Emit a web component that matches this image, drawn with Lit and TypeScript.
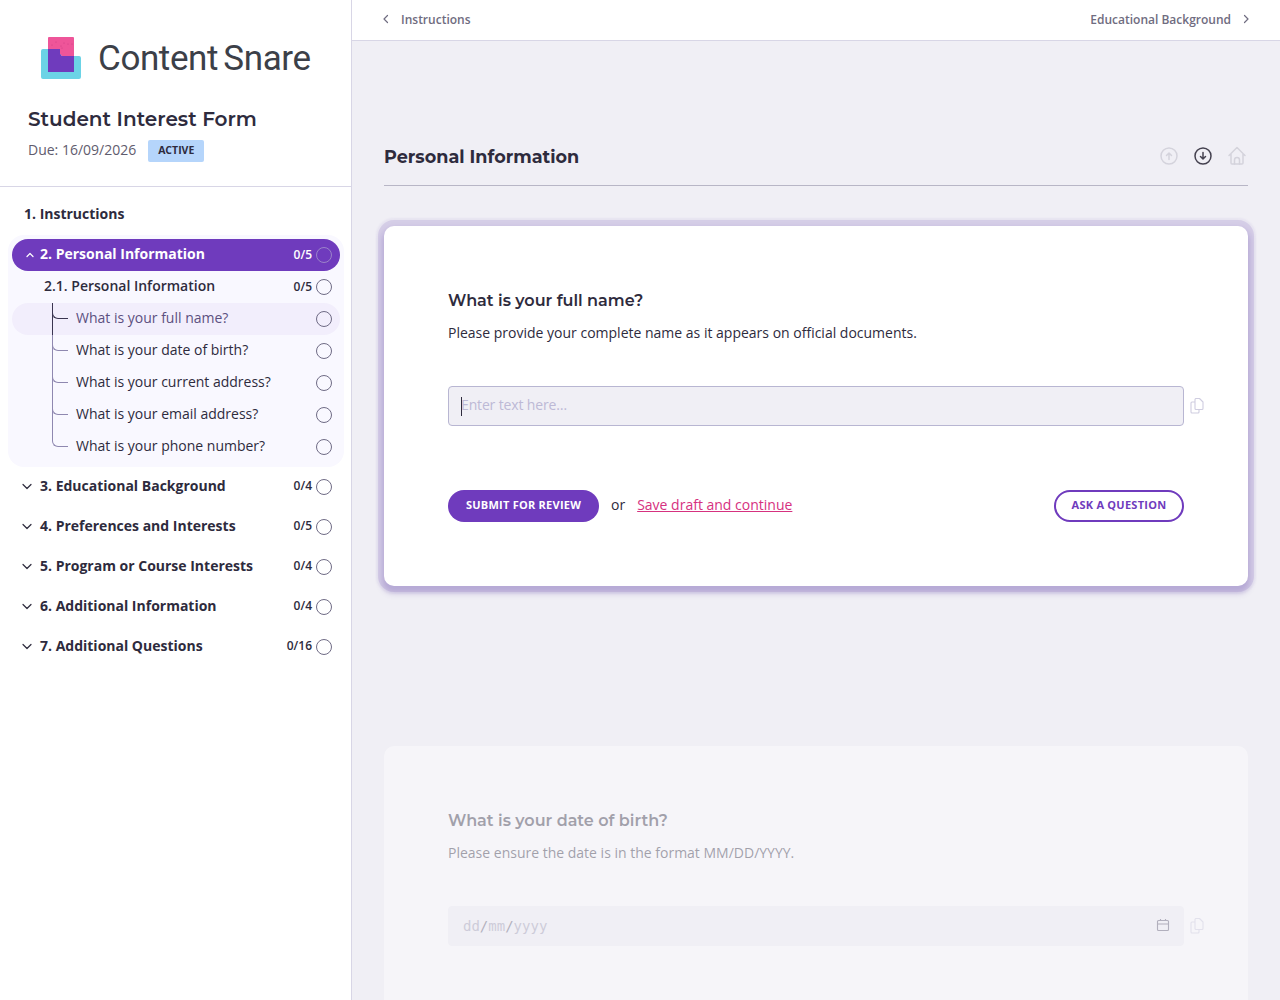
import { LitElement, css, html, svg } from 'lit';
import { customElement } from 'lit/decorators.js';

const QUESTIONS = [
    'What is your full name?',
    'What is your date of birth?',
    'What is your current address?',
    'What is your email address?',
    'What is your phone number?',
];

const SECTIONS = [
    { label: '3. Educational Background', count: '0/4' },
    { label: '4. Preferences and Interests', count: '0/5' },
    { label: '5. Program or Course Interests', count: '0/4' },
    { label: '6. Additional Information', count: '0/4' },
    { label: '7. Additional Questions', count: '0/16' },
];

const chevron = (d: string) => html`<svg class="chev" width="12" height="12" viewBox="0 0 12 12" fill="none" stroke="currentColor" stroke-width="1.2" stroke-linecap="round" stroke-linejoin="round"><path d=${d}></path></svg>`;

const copyIcon = html`<svg class="copy" width="14" height="16" viewBox="0 0 14 16" fill="none" stroke="currentColor" stroke-width="1.1" stroke-linejoin="round">
    <path d="M6 .5h3.500L13 4v6.500a1 1 0 0 1-1 1H6a1 1 0 0 1-1-1v-9a1 1 0 0 1 1-1z"></path>
    <path d="M5 4H2a1 1 0 0 0-1 1v9a1 1 0 0 0 1 1h6a1 1 0 0 0 1-1V11.500"></path>
</svg>`;

@customElement('app-root')
export class AppRoot extends LitElement {
    static override styles = css`
        :host {
            display: flex;
            height: 1000px;
            overflow: hidden;
            font-family: "Open Sans", "Liberation Sans", sans-serif;
            font-size: 14px;
            color: #2e2b3d;
            background: #f0eff5;
        }

        .sidebar {
            width: 351px;
            flex: none;
            background: #fff;
            border-right: 1px solid #d8d6e6;
        }

        .side-head {
            padding: 37px 0 24px 28px;
            border-bottom: 1px solid #d8d6e6;
        }

        .logo {
            display: flex;
            align-items: center;
            gap: 17px;
            margin-left: 13px;
            height: 42px;
        }

        .logo-text {
            font-family: Roboto, sans-serif;
            font-size: 35px;
            color: #3c4048;
            letter-spacing: -0.4px;
            word-spacing: -3px;
            white-space: nowrap;
        }

        .form-title {
            margin: 28px 0 0;
            font-family: Montserrat, Inter, sans-serif;
            font-size: 20px;
            font-weight: 600;
            line-height: 24px;
            color: #2e2b3d;
        }

        .due {
            display: flex;
            align-items: center;
            gap: 12px;
            margin-top: 9px;
            height: 22px;
            color: #5f5c6e;
        }

        .due-text {
            margin-bottom: 3px;
        }

        .badge {
            width: 56px;
            height: 22px;
            line-height: 21px;
            text-align: center;
            border-radius: 2px;
            background: #b5d5fb;
            color: #2e2b3d;
            font-size: 10.500px;
            font-weight: 700;
        }

        nav {
            padding: 11px 7px 0 8px;
        }

        .row {
            position: relative;
            display: flex;
            align-items: center;
            height: 32px;
            font-weight: 600;
            padding-right: 8px;
        }

        .row.strong {
            font-weight: 700;
        }

        .row .label {
            flex: 1;
            white-space: nowrap;
            margin-bottom: 3px;
        }

        .row.plain .label {
            margin-bottom: 1px;
        }

        .meta {
            display: flex;
            align-items: center;
            gap: 4px;
        }

        .count {
            font-size: 12px;
            font-weight: 600;
            margin-bottom: 2px;
        }

        .dot {
            width: 16px;
            height: 16px;
            box-sizing: border-box;
            flex: none;
            border: 1px solid #6f6b85;
            border-radius: 50%;
        }

        .chev {
            flex: none;
            color: #2e2b3d;
        }

        .plain {
            padding-left: 16px;
            padding-right: 12px;
        }

        .panel {
            margin-top: 5px;
            padding: 4px;
            background: #f9f8ff;
            border-radius: 16px;
        }

        .pill {
            padding-left: 12px;
            gap: 4px;
            background: #6f3bbd;
            color: #fff;
            border-radius: 16px;
        }

        .pill .chev {
            color: #fff;
        }

        .pill .dot {
            border-color: #9b83c9;
        }

        .sub {
            padding-left: 32px;
        }

        .q {
            padding-left: 64px;
            font-weight: 400;
            border-radius: 16px;
        }

        .q::before {
            content: "";
            position: absolute;
            left: 40px;
            top: 0;
            width: 15px;
            height: 15px;
            border-left: 1px solid #8f88b0;
            border-bottom: 1px solid #8f88b0;
            border-bottom-left-radius: 6px;
        }

        .q::after {
            content: "";
            position: absolute;
            left: 40px;
            top: 10px;
            bottom: 0;
            width: 1px;
            background: #8f88b0;
        }

        .q:last-child::after {
            display: none;
        }

        .q.current {
            background: #f2eefc;
            color: #5c5080;
        }

        .q.current::before {
            border-color: #3a3550;
        }

        .q.current::after {
            background: #3a3550;
        }

        .rest {
            display: flex;
            flex-direction: column;
            gap: 8px;
            margin-top: 3px;
        }

        .rest .row {
            padding-left: 13px;
            padding-right: 12px;
            gap: 7px;
        }

        .rest .label {
            margin-bottom: 2px;
        }

        .rest .count {
            margin-bottom: 1px;
        }

        .rest .dot {
            margin-top: 1px;
        }

        main {
            flex: 1;
            min-width: 0;
        }

        .topbar {
            display: flex;
            align-items: center;
            justify-content: space-between;
            height: 40px;
            padding: 0 28px;
            background: #fff;
            border-bottom: 1px solid #d8d6e6;
            font-size: 12px;
            font-weight: 600;
            color: #6f6c80;
        }

        .topbar span {
            display: flex;
            align-items: center;
            gap: 9px;
            margin-bottom: 2px;
        }

        .topbar .chev {
            color: #6f6c80;
        }

        .content {
            padding: 95px 32px 0;
        }

        .heading {
            display: flex;
            align-items: center;
            justify-content: space-between;
            height: 40px;
            padding-bottom: 9px;
            border-bottom: 1px solid #b8b6c6;
        }

        h2 {
            margin: 0;
            padding-top: 1px;
            font-family: Montserrat, Inter, sans-serif;
            font-size: 17.600px;
            font-weight: 700;
            color: #2e2b3d;
        }

        .tools {
            display: flex;
            gap: 14px;
            margin-right: 1px;
        }

        .tools svg {
            color: #d4d3dc;
        }

        .tools svg.on {
            color: #44414f;
        }

        .card {
            box-sizing: border-box;
            margin-top: 40px;
            padding: 64px;
            background: #fff;
            border-radius: 10px;
            box-shadow: 0 0 0 6px rgba(112, 80, 180, 0.15), 0 0 2px 8px rgba(112, 80, 180, 0.07), 0 5px 6px 2px rgba(90, 60, 160, 0.26);
        }

        .card.next {
            margin-top: 160px;
            height: 400px;
            opacity: 0.4;
            box-shadow: none;
        }

        h3 {
            margin: 0;
            padding-top: 1px;
            font-family: Montserrat, Inter, sans-serif;
            font-size: 16px;
            font-weight: 600;
            line-height: 20px;
            color: #2e2b3d;
        }

        .card p {
            margin: 12px 0 0;
            line-height: 20px;
        }

        .answer {
            display: flex;
            align-items: center;
            margin-top: 43px;
        }

        .field {
            position: relative;
            flex: 1;
            box-sizing: border-box;
            height: 40px;
            padding: 0 12px 3px;
            display: flex;
            align-items: center;
            background: #f0eff5;
            border: 1px solid #b8b6d2;
            border-radius: 4px;
            color: #bdb9d6;
            letter-spacing: -0.15px;
        }

        .caret {
            position: absolute;
            left: 12px;
            top: 10px;
            width: 1px;
            height: 19px;
            background: #2e2b3d;
        }

        .next .field {
            padding: 0 13px 0 14px;
            border-color: #f0eff5;
            color: #9a98b0;
            letter-spacing: 0;
            justify-content: space-between;
        }

        .date {
            font-family: "DejaVu Sans Mono", monospace;
            font-size: 14px;
        }

        .date i {
            font-style: normal;
            color: #55516a;
        }

        .cal {
            margin-top: -2px;
        }

        .copy {
            flex: none;
            margin-left: 6px;
            margin-right: -20px;
            color: #cfcde0;
        }

        .actions {
            display: flex;
            align-items: center;
            margin-top: 64px;
        }

        button {
            all: unset;
            box-sizing: border-box;
            height: 32px;
            padding-bottom: 3px;
            border-radius: 16px;
            text-align: center;
            font-size: 11px;
            font-weight: 700;
            letter-spacing: 0.25px;
        }

        .submit {
            width: 151px;
            background: #6f3bbd;
            color: #fff;
        }

        .or {
            margin: 0 12px 3px;
        }

        a {
            margin-bottom: 3px;
            color: #d6317f;
            text-decoration: underline;
        }

        .ask {
            width: 130px;
            margin-left: auto;
            border: 2px solid #6f3bbd;
            color: #6f3bbd;
        }
    `;

    renderLogo() {
        return html`<svg width="40" height="42" viewBox="41 37 40 42">
            <path fill="#6bd3e6" d="M43 49h18v7h18a2 2 0 0 1 2 2v19a2 2 0 0 1-2 2H43a2 2 0 0 1-2-2V51a2 2 0 0 1 2-2z"></path>
            <path fill="#ee5599" d="M49 37h24a1 1 0 0 1 1 1v18H62l-2-2v-5H48V38a1 1 0 0 1 1-1z"></path>
            <path fill="#6f3bbd" d="M48 49h12v5l2 2h12v16H48z"></path>
            ${[[56, 42], [64, 43], [72, 44], [68, 44], [52, 45], [61, 46], [62, 48]].map(
                ([x, y]) => svg`<circle cx=${x} cy=${y} r="0.5" fill="#c93a80"></circle>`
            )}
        </svg>`;
    }

    renderSide() {
        return html`<aside class="sidebar">
            <div class="side-head">
                <div class="logo">${this.renderLogo()}<span class="logo-text">Content Snare</span></div>
                <h1 class="form-title">Student Interest Form</h1>
                <div class="due"><span class="due-text">Due: 16/09/2026</span><span class="badge">ACTIVE</span></div>
            </div>
            <nav>
                <div class="row plain strong"><span class="label">1. Instructions</span></div>
                <div class="panel">
                    <div class="row pill strong">
                        ${chevron('M3 7.500 6 4.500l3 3')}
                        <span class="label">2. Personal Information</span>
                        <span class="meta"><span class="count">0/5</span><span class="dot"></span></span>
                    </div>
                    <div class="row sub">
                        <span class="label">2.1. Personal Information</span>
                        <span class="meta"><span class="count">0/5</span><span class="dot"></span></span>
                    </div>
                    <div>
                        ${QUESTIONS.map((q, i) => html`<div class="row q ${i === 0 ? 'current' : ''}">
                            <span class="label">${q}</span><span class="dot"></span>
                        </div>`)}
                    </div>
                </div>
                <div class="rest">
                    ${SECTIONS.map((s) => html`<div class="row strong">
                        ${chevron('M2 4.500 6 8.500l4-4')}
                        <span class="label">${s.label}</span>
                        <span class="meta"><span class="count">${s.count}</span><span class="dot"></span></span>
                    </div>`)}
                </div>
            </nav>
        </aside>`;
    }

    renderTools() {
        return html`<div class="tools">
            <svg width="20" height="20" viewBox="0 0 20 20" fill="none" stroke="currentColor" stroke-width="1.500" stroke-linecap="round" stroke-linejoin="round">
                <circle cx="10" cy="10" r="8"></circle><path d="M10 13.500v-6M7.500 9.500 10 7l2.500 2.500"></path>
            </svg>
            <svg class="on" width="20" height="20" viewBox="0 0 20 20" fill="none" stroke="currentColor" stroke-width="1.500" stroke-linecap="round" stroke-linejoin="round">
                <circle cx="10" cy="10" r="8"></circle><path d="M10 6.500v6M7.500 10.500 10 13l2.500-2.500"></path>
            </svg>
            <svg width="20" height="20" viewBox="0 0 20 20" fill="none" stroke="currentColor" stroke-width="1.500" stroke-linecap="round" stroke-linejoin="round">
                <path d="M2 9.500 10 1.500l8 8M4 7.500V17a1 1 0 0 0 1 1h10a1 1 0 0 0 1-1V7.500"></path><path d="M7.500 18v-4a2.500 2.500 0 0 1 5 0v4"></path>
            </svg>
        </div>`;
    }

    override render() {
        return html`
            ${this.renderSide()}
            <main>
                <div class="topbar">
                    <span>${chevron('M7.500 2.500 4 6l3.500 3.500')}Instructions</span>
                    <span>Educational Background${chevron('M4.500 2.500 8 6l-3.500 3.500')}</span>
                </div>
                <div class="content">
                    <div class="heading"><h2>Personal Information</h2>${this.renderTools()}</div>
                    <section class="card">
                        <h3>What is your full name?</h3>
                        <p>Please provide your complete name as it appears on official documents.</p>
                        <div class="answer">
                            <div class="field"><span class="caret"></span>Enter text here…</div>
                            ${copyIcon}
                        </div>
                        <div class="actions">
                            <button class="submit">SUBMIT FOR REVIEW</button>
                            <span class="or">or</span>
                            <a href="#">Save draft and continue</a>
                            <button class="ask">ASK A QUESTION</button>
                        </div>
                    </section>
                    <section class="card next">
                        <h3>What is your date of birth?</h3>
                        <p>Please ensure the date is in the format MM/DD/YYYY.</p>
                        <div class="answer">
                            <div class="field">
                                <span class="date">dd<i>/</i>mm<i>/</i>yyyy</span>
                                <svg class="cal" width="14" height="14" viewBox="0 0 14 14" fill="none" stroke="#55516a" stroke-width="1.100"><rect x="1.500" y="2.500" width="11" height="10" rx="1"></rect><path d="M1.500 6h11M4.500 1v2M9.500 1v2"></path></svg>
                            </div>
                            ${copyIcon}
                        </div>
                    </section>
                </div>
            </main>
        `;
    }
}
